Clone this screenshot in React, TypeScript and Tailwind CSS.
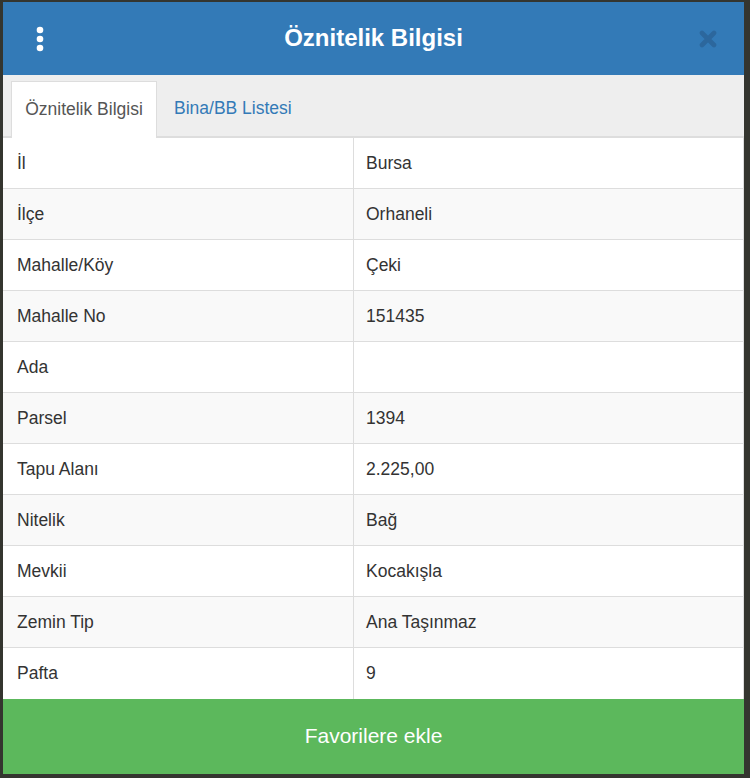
import React from "react";

const rows: [string, string][] = [
  ["İl", "Bursa"],
  ["İlçe", "Orhaneli"],
  ["Mahalle/Köy", "Çeki"],
  ["Mahalle No", "151435"],
  ["Ada", ""],
  ["Parsel", "1394"],
  ["Tapu Alanı", "2.225,00"],
  ["Nitelik", "Bağ"],
  ["Mevkii", "Kocakışla"],
  ["Zemin Tip", "Ana Taşınmaz"],
  ["Pafta", "9"],
];

export default function App() {
  return (
    <div
      className="w-[750px] h-[778px] bg-[#34352f] pt-[2px] pl-[3px] overflow-hidden"
      style={{ fontFamily: '"Liberation Sans", Arial, sans-serif' }}
    >
      <div className="w-[741px] flex flex-col bg-white">
        {/* Header */}
        <div className="h-[73px] bg-[#337ab7] flex items-center relative">
          <div className="w-[72px] flex justify-center pl-[1px]">
            <svg width="10" height="26" viewBox="0 0 10 26">
              <circle cx="5" cy="4" r="3.3" fill="#fff" />
              <circle cx="5" cy="13" r="3.3" fill="#fff" />
              <circle cx="5" cy="22" r="3.3" fill="#fff" />
            </svg>
          </div>
          <div className="flex-1 text-center text-white text-[24px] font-bold leading-none pb-[1px]">
            Öznitelik Bilgisi
          </div>
          <div className="w-[72px] flex justify-center pr-[1px]">
            <svg width="18" height="18" viewBox="0 0 18 18">
              <path
                d="M3 3 L15 15 M15 3 L3 15"
                stroke="#2c679d"
                strokeWidth="4.6"
                strokeLinecap="round"
              />
            </svg>
          </div>
        </div>

        {/* Tabs */}
        <div className="h-[63px] bg-[#eeeeee] border-b-2 border-[#dddddd] flex items-end pl-[8px]">
          <div className="h-[57px] -mb-[2px] w-[146px] bg-white border border-b-0 border-[#dddddd] flex items-center justify-center text-[17.5px] text-[#555555] pb-[1px]">
            Öznitelik Bilgisi
          </div>
          <div className="h-[57px] -mb-[2px] flex items-center pl-[17px] text-[17.5px] text-[#337ab7] pb-[3px]">
            Bina/BB Listesi
          </div>
        </div>

        {/* Table */}
        <div className="flex flex-col border-r border-[#dddddd]">
          {rows.map(([k, v], i) => (
            <div
              key={k}
              className={`flex h-[51px] ${i < rows.length - 1 ? "border-b" : ""} border-[#dddddd] ${
                i % 2 === 1 ? "bg-[#f9f9f9]" : "bg-white"
              }`}
            >
              <div className="w-[351px] border-r border-[#dddddd] flex items-center pl-[14px] text-[17.5px] text-[#333333]">
                {k}
              </div>
              <div className="flex-1 flex items-center pl-[12px] text-[17.5px] text-[#333333]">
                {v}
              </div>
            </div>
          ))}
        </div>

        {/* Button */}
        <div className="h-[75px] bg-[#5cb85c] flex items-center justify-center text-white text-[21px] pb-[1px]">
          Favorilere ekle
        </div>
      </div>
    </div>
  );
}
